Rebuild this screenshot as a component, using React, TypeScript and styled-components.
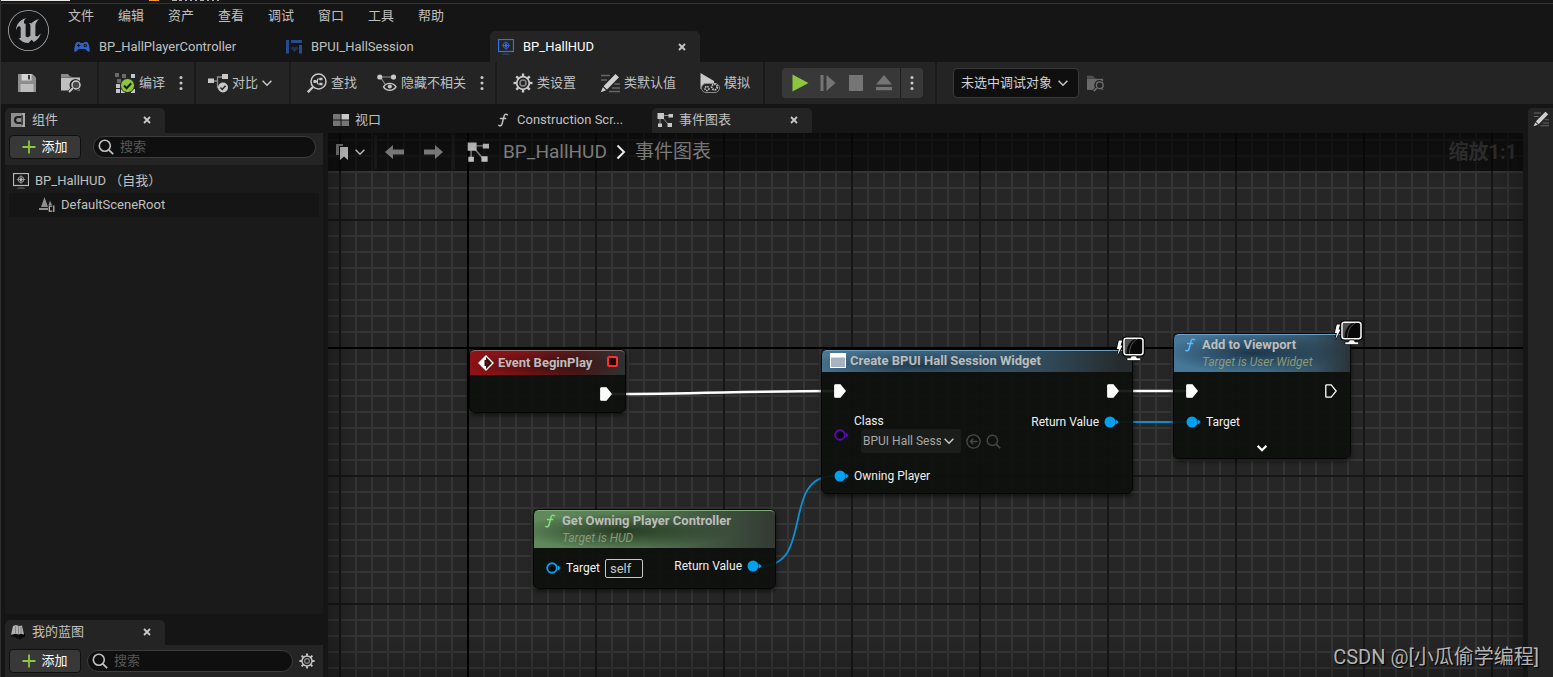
import React from 'react';
import styled, { createGlobalStyle, css } from 'styled-components';
import { SiUnrealengine } from 'react-icons/si';

const GlobalStyle = createGlobalStyle`
  * { box-sizing: border-box; }
  html, body { margin: 0; padding: 0; background: #151515; }
  body, button, input, select {
    font-family: Roboto, "Noto Sans CJK SC", sans-serif;
    font-size: 13px;
    line-height: 16px;
    color: #c0c0c0;
  }
  button { background: none; border: 0; padding: 0; margin: 0; cursor: pointer; }
  svg { display: block; flex: none; }
`;

/* ---------- window frame ---------- */

const Window = styled.div`
  position: relative;
  display: flex;
  flex-direction: column;
  min-height: 100vh;
  background: #151515;
  border-left: 1px solid #2e302e;
  overflow: hidden;
`;

const BackStrip = styled.div`
  height: 4px;
  background: #161616;
  border-bottom: 1px solid #333;
`;

const Header = styled.header`
  display: flex;
  height: 58px;
`;

const LogoCell = styled.div`
  width: 55px;
  padding: 6px 0 0 7px;
  color: #a9adb0;
`;

const HeaderMain = styled.div`
  flex: 1;
  display: flex;
  flex-direction: column;
  justify-content: space-between;
`;

const MenuBar = styled.nav`
  display: flex;
`;

const MenuItem = styled.button`
  height: 24px;
  padding: 0 12px;
`;

const DocTabs = styled.div`
  display: flex;
  gap: 2px;
  padding-left: 10px;
`;

const DocTab = styled.div<{ $active?: boolean }>`
  display: flex;
  align-items: center;
  gap: 9px;
  width: 210px;
  height: 31px;
  padding: 0 12px 0 8px;
  border-radius: 5px 5px 0 0;
  color: #c0c0c0;
  ${p => p.$active && css`background: #242424; color: #fff;`}
`;

const TabLabel = styled.span`
  flex: 1;
  white-space: nowrap;
`;

const CloseButton = styled.button`
  display: flex;
  align-items: center;
  justify-content: center;
  width: 12px;
  height: 16px;
`;

/* ---------- toolbar ---------- */

const Toolbar = styled.div`
  display: flex;
  height: 42px;
  background: #242424;
  white-space: nowrap;
`;

const Group = styled.div<{ $gap?: number; $start?: number; $end?: number }>`
  display: flex;
  align-items: center;
  gap: ${p => p.$gap ?? 0}px;
  padding: 0 ${p => p.$end ?? 6}px 0 ${p => p.$start ?? 6}px;
  & + & { border-left: 2px solid #1a1a1a; }
`;

const ToolButton = styled.button`
  display: flex;
  align-items: center;
  gap: 4px;
  height: 32px;
  padding: 0 10px;
`;

const DotsButton = styled.button`
  width: 9px;
  margin-left: 4px;
  padding-right: 5px;
`;

const PlayBar = styled.div`
  display: flex;
  height: 30px;
  padding-left: 4px;
  background: #383838;
  border-radius: 4px;
`;

const PlayButton = styled.button<{ $last?: boolean }>`
  display: flex;
  align-items: center;
  justify-content: center;
  width: 28px;
  ${p => p.$last && css`width: 23px; margin-left: 2px; border-left: 1px solid #1f1f1f;`}
`;

const SelectBox = styled.div`
  position: relative;
  display: flex;
  svg { position: absolute; right: 11px; top: 50%; margin-top: -5px; pointer-events: none; }
`;

const DebugSelect = styled.select`
  appearance: none;
  width: 126px;
  height: 30px;
  padding: 0 0 0 7px;
  color: #d0d0d0;
  background: #0f0f0f;
  border: 1px solid #3a3a3a;
  border-radius: 4px;
`;

/* ---------- body columns ---------- */

const Body = styled.div`
  flex: 1;
  display: flex;
  padding-top: 4px;
`;

const SidePanel = styled.aside`
  display: flex;
  flex-direction: column;
  width: 327px;
  padding: 0 5px 0 4px;
`;

const TabRow = styled.div`
  display: flex;
  gap: 2px;
`;

const PanelTab = styled.div<{ $active?: boolean }>`
  display: flex;
  align-items: center;
  gap: 6px;
  width: 160px;
  height: 25px;
  padding: 0 12px 2px 5px;
  border-radius: 5px 5px 0 0;
  background: ${p => (p.$active ? '#242424' : 'transparent')};
`;

const PanelBar = styled.div<{ $pad: string; $gap: number }>`
  display: flex;
  align-items: center;
  gap: ${p => p.$gap}px;
  padding: ${p => p.$pad};
  background: #242424;
`;

const AddButton = styled.button`
  display: flex;
  align-items: center;
  justify-content: center;
  gap: 5px;
  width: 72px;
  height: 24px;
  color: #fff;
  background: #383838;
  border: 1px solid #101010;
  border-radius: 4px;
`;

const SearchField = styled.label`
  flex: 1;
  display: flex;
  align-items: center;
  gap: 6px;
  height: 22px;
  padding: 0 10px 0 4px;
  background: #0f0f0f;
  border: 1px solid #3c3c3c;
  border-radius: 11px;
  input {
    flex: 1;
    min-width: 0;
    padding: 0;
    background: none;
    border: 0;
    outline: 0;
  }
  input::placeholder { color: #575757; }
`;

const Tree = styled.ul`
  flex: 1;
  margin: 0 0 6px;
  padding: 4px;
  list-style: none;
  background: #1a1a1a;
  border-radius: 4px 4px 0 0;
`;

const TreeRow = styled.li<{ $depth?: number }>`
  display: flex;
  align-items: center;
  gap: 6px;
  height: 24px;
  padding-left: ${p => 4 + (p.$depth ?? 0) * 26}px;
  background: ${p => (p.$depth ? '#151515' : 'transparent')};
`;

const Center = styled.main`
  flex: 1;
  display: flex;
  flex-direction: column;
  min-width: 0;
`;

const RightRail = styled.aside`
  width: 25px;
  margin-left: 5px;
  padding: 3px 0 0 5px;
  background: #242424;
  border-radius: 4px 0 0 0;
`;

/* ---------- graph ---------- */

const Graph = styled.section`
  position: relative;
  flex: 1;
  overflow: hidden;
  background-color: #262626;
  background-image:
    linear-gradient(#000, #000),
    linear-gradient(#000, #000),
    linear-gradient(90deg, #161616 2px, transparent 2px),
    linear-gradient(#161616 2px, transparent 2px),
    linear-gradient(90deg, #353535 2px, transparent 2px),
    linear-gradient(#353535 2px, transparent 2px);
  background-size: 2px 100%, 100% 2px, 128px 128px, 128px 128px, 16px 16px, 16px 16px;
  background-position: 139px 0, 0 214px, 11px 86px, 11px 86px, 11px 6px, 11px 6px;
  background-repeat: no-repeat, no-repeat, repeat, repeat, repeat, repeat;
  &::after {
    content: '';
    position: absolute;
    inset: 0;
    box-shadow: inset 0 0 40px rgba(0, 0, 0, 0.45);
    pointer-events: none;
  }
`;

const GraphBar = styled.div`
  position: relative;
  display: flex;
  align-items: center;
  height: 38px;
  padding-right: 6px;
  background: rgba(0, 0, 0, 0.56);
  white-space: nowrap;
`;

const BarPart = styled.div<{ $pad: string; $gap: number }>`
  display: flex;
  align-items: center;
  gap: ${p => p.$gap}px;
  height: 34px;
  padding: ${p => p.$pad};
  & + & { border-left: 3px solid #1a1a1a; }
`;

const CrumbTrail = styled.nav`
  display: flex;
  align-items: center;
  gap: 9px;
`;

const Crumb = styled.a`
  font-size: 19px;
  line-height: 24px;
  color: #868686;
  text-decoration: none;
`;

const ZoomLabel = styled.div`
  margin-left: auto;
  font-size: 20px;
  line-height: 24px;
  font-weight: 700;
  color: #303030;
`;

const Wires = styled.svg`
  position: absolute;
  left: 0;
  top: 0;
`;

type Tone = 'event' | 'widget' | 'call' | 'pure';

const toneFill: Record<Tone, string> = {
  event: 'radial-gradient(ellipse 80px 14px at 76px 14px, rgba(40,8,8,.6), transparent), linear-gradient(90deg, #8f1216 0%, #841518 35%, #4a1b1c 70%, #303030 96%)',
  widget: 'radial-gradient(ellipse 120px 16px at 100px 14px, rgba(16,32,44,.65), transparent), linear-gradient(90deg, #4a7794 0%, #406a86 40%, #314c5c 70%, #262c2e 96%)',
  call: 'radial-gradient(ellipse 90px 20px at 80px 18px, rgba(16,34,48,.75), transparent), linear-gradient(90deg, #47789a 0%, #42708f 50%, #365366 80%, #2a3338 100%)',
  pure: 'radial-gradient(ellipse 110px 18px at 90px 20px, rgba(22,36,20,.75), transparent), linear-gradient(90deg, #608a5c 0%, #547a50 45%, #405440 75%, #333a33 100%)',
};

const toneEdge: Record<Tone, string> = {
  event: '#8d7476',
  widget: '#6f9ab8',
  call: '#6aa3cc',
  pure: '#7fae7a',
};

const headSize: Record<Tone, { height: number; top: number }> = {
  event: { height: 25, top: 4 },
  widget: { height: 22, top: 2 },
  call: { height: 38, top: 2 },
  pure: { height: 38, top: 2 },
};

const Node = styled.article<{ $x: number; $y: number; $w: number; $h: number }>`
  position: absolute;
  left: ${p => p.$x}px;
  top: ${p => p.$y}px;
  width: ${p => p.$w}px;
  height: ${p => p.$h}px;
  border-radius: 6px;
  background: rgba(13, 16, 13, 0.93);
  border: 1px solid #060606;
  box-shadow: 0 2px 5px rgba(0, 0, 0, 0.6);
  font-size: 12px;
  color: #f0f0f0;
`;

const NodeHead = styled.header<{ $tone: Tone }>`
  display: flex;
  align-items: flex-start;
  gap: 4px;
  height: ${p => headSize[p.$tone].height}px;
  padding: ${p => headSize[p.$tone].top}px 5px 0 8px;
  border-radius: 5px 5px 0 0;
  border-top: 1px solid ${p => toneEdge[p.$tone]};
  background: ${p => toneFill[p.$tone]};
`;

const NodeTitle = styled.h2`
  flex: 1;
  margin: 0;
  font-size: 13px;
  line-height: 16px;
  font-weight: 700;
  color: #bdbdbd;
  white-space: nowrap;
  small {
    display: block;
    font-size: 12px;
    line-height: 18px;
    font-weight: 400;
    font-style: italic;
    color: #8b9a78;
  }
`;

const NodeBody = styled.div`
  display: flex;
  justify-content: space-between;
  align-items: flex-start;
  padding: 8px 13px 0 12px;
`;

const PinColumn = styled.div<{ $end?: boolean }>`
  display: flex;
  flex-direction: column;
  align-items: ${p => (p.$end ? 'flex-end' : 'flex-start')};
  gap: 12px;
`;

const Pin = styled.div<{ $h?: number }>`
  display: flex;
  align-items: center;
  gap: 5px;
  height: ${p => p.$h ?? 16}px;
  white-space: nowrap;
`;

const ClassField = styled.div`
  display: flex;
  flex-direction: column;
  height: 42px;
  label { line-height: 15px; }
`;

const ClassControls = styled.div`
  display: flex;
  align-items: center;
  gap: 5px;
  padding-left: 7px;
`;

const ClassSelectBox = styled(SelectBox)`
  svg { right: 7px; }
`;

const ClassSelect = styled.select`
  appearance: none;
  width: 100px;
  height: 24px;
  padding: 0 20px 0 2px;
  font-size: 12px;
  color: #a8a8a8;
  background: #1b1d1b;
  border: 0;
  border-radius: 3px;
`;

const SelfInput = styled.input`
  width: 38px;
  height: 19px;
  padding: 0 4px;
  color: #c8c8c8;
  background: transparent;
  border: 1px solid #c8c8c8;
  border-radius: 2px;
`;

const Expand = styled.button`
  display: flex;
  justify-content: center;
  width: 100%;
  padding-top: 13px;
`;

const Badge = styled.div`
  position: absolute;
  right: -13px;
  top: -14px;
`;

const Watermark = styled.div`
  position: absolute;
  right: 14px;
  bottom: 8px;
  font-size: 20px;
  line-height: 24px;
  color: #b4b4b4;
  text-shadow: 1px 1px 1px #000;
  white-space: nowrap;
`;

/* ---------- icons ---------- */

const CloseIcon = () => (
  <svg width="8" height="8" viewBox="0 0 8 8" stroke="#c8c8c8" strokeWidth="1.8">
    <path d="M1 1l6 6M7 1L1 7" />
  </svg>
);

const Chevron = ({ color = '#c8c8c8', bold = false }) => (
  <svg width="10" height="10" viewBox="0 0 10 10" fill="none" stroke={color} strokeWidth={bold ? 2.2 : 1.5}>
    <path d="M.6 2.8L5 7.2l4.400-4.400" />
  </svg>
);

const Dots = () => (
  <svg width="4" height="16" viewBox="0 0 4 16" fill="#c8c8c8">
    <circle cx="2" cy="2.500" r="1.500" /><circle cx="2" cy="8" r="1.500" /><circle cx="2" cy="13.500" r="1.500" />
  </svg>
);

const GamepadIcon = () => (
  <svg width="16" height="12" viewBox="0 0 16 12">
    <path fill="#2f62c4" d="M3.500 1h2.200l.8 1h3l.8-1h2.200c1.200 0 2 1.500 2.500 3.500.5 2 .8 3.600.8 5 0 1.300-1.400 1.600-2.300.8L11.200 8H4.800l-2.300 2.300c-.9.800-2.300.5-2.300-.8 0-1.400.3-3 .8-5S2.300 1 3.500 1z" />
    <path stroke="#151515" strokeWidth="1" d="M3 4.500h3.400M4.700 2.800v3.400" />
    <circle cx="11.300" cy="4.500" r="1.700" fill="#151515" /><circle cx="11.300" cy="4.500" r=".7" fill="#2f62c4" />
  </svg>
);

const WidgetIcon = () => (
  <svg width="16" height="14" viewBox="0 0 16 14" fill="#294a8e">
    <path d="M0 0h3v13.500H0zM5 0h11v3H5zM13 5h3v8.500h-3z" />
    <path d="M8.500 12L5.300 8.800c-.7-1.800 1.800-2.800 3.200-1 1.400-1.800 3.900-.8 3.200 1z" opacity=".6" />
  </svg>
);

const HudIcon = ({ color }: { color: string }) => (
  <svg width="16" height="16" viewBox="0 0 16 16" fill="none" stroke={color}>
    <rect x=".5" y=".5" width="15" height="12" strokeWidth="1.200" />
    <circle cx="8" cy="6.500" r="2.900" strokeWidth="1" opacity=".8" />
    <path d="M8 2.200v8.600M3.700 6.500h8.600" strokeWidth=".9" opacity=".7" />
    <circle cx="8" cy="6.500" r="1.500" fill={color} stroke="none" />
    <path d="M3.500 15.500c2-1.200 7-1.200 9 0z" fill={color} stroke="none" opacity=".6" />
  </svg>
);

const SaveIcon = () => (
  <svg width="20" height="20" viewBox="0 0 20 20">
    <path fill="#8e8e8e" d="M1 1h14.500L19 4.500V19H1z" />
    <path fill="#d4d4d4" d="M4.500 1h10v6.500h-10z" /><path fill="#3a3a3a" d="M11 2h2v4.500h-2z" />
    <path fill="#bdbdbd" d="M3.500 11h13v8h-13z" />
  </svg>
);

const BrowseIcon = ({ size = 20, dim = false }) => (
  <svg width={size} height={size} viewBox="0 0 20 20" opacity={dim ? 0.45 : 1}>
    <path fill="#8a8a8a" d="M0 1h7l2 2.500h1.500V4H0z" />
    <path fill="#c0c0c0" d="M0 4.500h19v13H0z" />
    <circle cx="14.500" cy="12" r="6" fill="#242424" />
    <circle cx="15" cy="12" r="4" fill={dim ? '#242424' : '#4a4a4a'} stroke="#d0d0d0" strokeWidth="1.500" />
    <path stroke="#242424" strokeWidth="4" d="M12 15l-4 4.500" /><path stroke="#d0d0d0" strokeWidth="1.800" d="M12 15l-4 4" />
  </svg>
);

const CompileIcon = () => (
  <svg width="20" height="20" viewBox="0 0 20 20">
    <path fill="#6a6a6a" d="M0 0h4v4H0zM7 1h4v4H7zM2 6h4v4H2z" />
    <path fill="#c4c4c4" d="M16 1h4v4h-4zM1 11h4v4H1zM1 16h4v4H1zM6 16h4v4H6zM16 16h4v4h-4zM10 6h4v4h-4z" />
    <circle cx="12.500" cy="12.500" r="7" fill="#8cc63f" stroke="#242424" strokeWidth="1" />
    <path d="M9 12.500l2.600 2.800 4.600-5" fill="none" stroke="#16230a" strokeWidth="2" />
  </svg>
);

const DiffIcon = () => (
  <svg width="20" height="20" viewBox="0 0 20 20">
    <path d="M5 8h4.500V4H14M9.500 8v6.500H12" fill="none" stroke="#8a8a8a" strokeWidth="1.300" />
    <path fill="#c8c8c8" d="M0 5.500h6v4.500H0zM14 1h6v5h-6z" />
    <circle cx="15" cy="14.500" r="5" fill="#c8c8c8" />
    <path d="M12.400 14.500l1.900 2 3.200-3.700" fill="none" stroke="#242424" strokeWidth="1.500" />
  </svg>
);

const FindIcon = () => (
  <svg width="20" height="20" viewBox="0 0 20 20" fill="none" stroke="#c8c8c8">
    <circle cx="11.500" cy="8.500" r="7.500" strokeWidth="1.500" />
    <path d="M6 14L.8 19.200" strokeWidth="2.400" />
    <path d="M8 8.500h2.500M13 6h-2.500v5H13" strokeWidth="1" />
    <path d="M6.500 7h3v3h-3zM12.500 4.800h3v2.400h-3zM12.500 9.800h3v2.400h-3z" fill="#c8c8c8" stroke="none" />
  </svg>
);

const HideIcon = () => (
  <svg width="20" height="20" viewBox="0 0 20 20" fill="none">
    <path d="M3 4h14M4 5l4 6" stroke="#8a8a8a" strokeWidth="1.200" />
    <circle cx="2.800" cy="4" r="2.600" fill="#c8c8c8" /><circle cx="16.500" cy="4" r="2.600" fill="#c8c8c8" />
    <path d="M6.500 13.800c3-4.600 9.500-4.600 12.500 0-3 4.600-9.500 4.600-12.500 0z" fill="#242424" stroke="#c8c8c8" strokeWidth="1.400" />
    <circle cx="12.800" cy="13.500" r="2.100" fill="#c8c8c8" />
  </svg>
);

const GearIcon = ({ size = 20 }) => (
  <svg width={size} height={size} viewBox="0 0 20 20" fill="none" stroke="#c8c8c8">
    <circle cx="10" cy="10" r="6.300" strokeWidth="1.800" />
    <circle cx="10" cy="10" r="3" strokeWidth="1.500" opacity=".6" />
    {[0, 45, 90, 135, 180, 225, 270, 315].map(a => (
      <path key={a} d="M10 .5v3" strokeWidth="2.400" transform={`rotate(${a} 10 10)`} />
    ))}
  </svg>
);

const PencilIcon = ({ size = 20 }) => (
  <svg width={size} height={size} viewBox="0 0 20 20">
    <path d="M1 2.500h9M1 7h6M14.500 11H20M12 15h8M9 18.500h11" stroke="#666" strokeWidth="1.300" />
    <path d="M15.500 1L19 4.200 7 16.500 3.500 13.200z" fill="#d0d0d0" />
    <path d="M2.800 14.300l3.300 3L.8 19.200z" fill="#d0d0d0" />
  </svg>
);

const SimulateIcon = () => (
  <svg width="20" height="20" viewBox="0 0 20 20">
    <path d="M.5 0L14 8v4L.5 16z" fill="#c8c8c8" />
    <rect x="1.500" y="10.500" width="18" height="9" rx="4.500" fill="#242424" stroke="#8a8a8a" />
    <circle cx="7" cy="15.500" r="2" fill="none" stroke="#c8c8c8" strokeWidth="1.600" strokeDasharray="1.400 .8" />
    <circle cx="14.500" cy="14" r="2.800" fill="none" stroke="#c8c8c8" strokeWidth="1.800" strokeDasharray="1.600 .9" />
  </svg>
);

const PlayIcon = () => <svg width="18" height="18" viewBox="0 0 18 18"><path d="M1.500.5L17.500 9l-16 8.500z" fill="#8cc63f" /></svg>;
const StepIcon = () => <svg width="16" height="16" viewBox="0 0 16 16"><path d="M.5 0h3v16h-3zM6.500 0L15.500 8l-9 8z" fill="#757575" /></svg>;
const StopIcon = () => <svg width="16" height="16" viewBox="0 0 16 16"><path d="M1 0h14v16H1z" fill="#757575" /></svg>;
const EjectIcon = () => <svg width="16" height="16" viewBox="0 0 16 16"><path d="M8 0l8 9.500H0zM0 12h16v3.200H0z" fill="#757575" /></svg>;

const ComponentsIcon = () => (
  <svg width="16" height="16" viewBox="0 0 16 16">
    <path fill="#8f8f8f" d="M1 1h10.500v14H1z" />
    <path d="M11.500 5H8.200Q5 5 5 8t3.200 3h3.300" stroke="#202020" strokeWidth="2.200" fill="none" />
    <path fill="#a8a8a8" d="M11.500 1H15v14h-3.500v-2h1.300V3h-1.300z" />
  </svg>
);

const BlueprintBookIcon = () => (
  <svg width="16" height="16" viewBox="0 0 16 16">
    <path fill="#0a0a0a" d="M1.500 9h13.500v4l-3 1-2 1.500L6 14l-5-2z" />
    <path fill="#b0b0b0" d="M3 2l3-1 3 1 3-.5 2 9-3-.8-2.500.8-3-.8L1 10.800z" />
    <path d="M5.500 2.500v7M8.500 2v8M11 2.500v7" stroke="#777" strokeWidth=".8" />
  </svg>
);

const SceneRootIcon = () => (
  <svg width="16" height="16" viewBox="0 0 16 16">
    <path fill="#8e8e8e" d="M5.500 0L9 10H2zM11 3.500l2 4.500H9.500zM0 11h9v2H0z" />
    <path d="M13.300 9.200h-3v5h3M14.800 8.500v6.500" stroke="#b5b5b5" strokeWidth="1.300" fill="none" />
  </svg>
);

const PlusIcon = () => <svg width="14" height="14" viewBox="0 0 14 14"><path d="M7 .5v13M.5 7h13" stroke="#8cc63f" strokeWidth="1.800" /></svg>;

const SearchIcon = ({ color = '#c0c0c0', size = 16 }) => (
  <svg width={size} height={size} viewBox="0 0 16 16" fill="none" stroke={color}>
    <circle cx="6.800" cy="6.800" r="5.500" strokeWidth="1.600" /><path d="M10.800 10.800l4.400 4.400" strokeWidth="1.800" />
  </svg>
);

const ViewportIcon = () => (
  <svg width="16" height="12" viewBox="0 0 16 12">
    <path fill="#757575" d="M0 0h7.500v5.500H0zM0 6.500h7.500V12H0zM8.500 6.500H16V12H8.500z" /><path fill="#c8c8c8" d="M8.500 0H16v5.500H8.500z" />
  </svg>
);

const FunctionIcon = ({ color }: { color: string }) => (
  <svg width="16" height="16" viewBox="0 0 16 16" fill="none" stroke={color} strokeWidth="1.500" strokeLinecap="round">
    <path d="M12.500 2.800C10.800 1.600 9.400 2.400 8.900 4.600L7.200 11.300c-.5 2.200-1.700 3-3.400 2M5.500 6.500h5.200" />
  </svg>
);

const GraphIcon = ({ size = 16 }) => (
  <svg width={size} height={size} viewBox="0 0 16 16">
    <path d="M4 3.500h9M4.500 4.500l7 8M3 5v8" stroke="#8a8a8a" strokeWidth="1" />
    <path fill="#c8c8c8" d="M.5 1H7v6H.5zM11.500 2H16v3.500h-4.500zM1 11.500h4V15H1zM10.500 11H15v4h-4.500z" />
  </svg>
);

const BookmarkIcon = () => (
  <svg width="12" height="16" viewBox="0 0 12 16">
    <path d="M0 0h7v2H3v9H0z" fill="#7a7a7a" /><path d="M4 3h8v13l-4-3.500L4 16z" fill="#c8c8c8" />
  </svg>
);

const ArrowIcon = ({ flip = false }) => (
  <svg width="20" height="14" viewBox="0 0 20 14" fill="#808080">
    <path d="M0 7l8-7v4.500h11v5H8V14z" transform={flip ? 'translate(20 0) scale(-1 1)' : undefined} />
  </svg>
);

const CrumbChevron = () => (
  <svg width="10" height="16" viewBox="0 0 10 16" fill="none" stroke="#fff" strokeWidth="2"><path d="M1.500 1.500L8 8l-6.500 6.500" /></svg>
);

const ExecPin = ({ open = false }) => (
  <svg width="12" height="14" viewBox="0 0 12 14">
    <path d="M1.600.8h4.600L11.200 7l-5 6.200H1.600q-.8 0-.8-.8V1.600q0-.8.8-.8z" fill={open ? 'none' : '#fff'} stroke="#fff" strokeWidth="1.300" />
  </svg>
);

const DataPin = ({ color = '#00a2f0', open = false }) => (
  <svg width="15" height="12" viewBox="0 0 15 12">
    <circle cx="6" cy="6" r={open ? 4.800 : 5.500} fill={open ? '#080a08' : color} stroke={color} strokeWidth={open ? 1.900 : 0} />
    <path d="M11.700 3.200L14.700 6l-3 2.800z" fill={color} />
  </svg>
);

const EventIcon = () => (
  <svg width="16" height="16" viewBox="0 0 16 16">
    <path d="M8 1l7 7-7 7-7-7z" fill="#360a0b" stroke="#fff" strokeWidth="1.400" />
    <path d="M8 1v4H6.500v6H8v4L1 8z" fill="#fff" /><path d="M8 5l3.500 3L8 11z" fill="#5a1012" />
  </svg>
);

const DelegateIcon = () => (
  <svg width="14" height="14" viewBox="0 0 14 14"><rect x="2" y="2" width="9" height="9" rx="1" fill="#1c0303" stroke="#ff2e2e" strokeWidth="2" /></svg>
);

const WidgetNodeIcon = () => (
  <svg width="16" height="16" viewBox="0 0 16 16"><path fill="#fff" d="M0 0h16v15H0z" /><path fill="#a6b2bf" d="M1 4.500h14V14H1z" /></svg>
);

const BackCircle = () => (
  <svg width="15" height="15" viewBox="0 0 15 15" fill="none" stroke="#454745" strokeWidth="1.400">
    <circle cx="7.500" cy="7.500" r="6.600" /><path d="M11.500 7.500h-7M7.300 4.700L4.400 7.500l2.900 2.800" />
  </svg>
);

const ClientIcon = () => (
  <svg width="30" height="26" viewBox="0 0 30 26">
    <path d="M3.800 4.500h3.400L5.600 9.500h2L2.400 19.500 3.800 13H1.800z" fill="#fff" stroke="#000" strokeWidth="1.400" paintOrder="stroke" />
    <rect x="7.200" y=".6" width="22.600" height="20" rx="3.500" fill="#000" />
    <rect x="9" y="2.200" width="19" height="16.600" rx="2.500" fill="#080808" stroke="#fff" strokeWidth="1.500" />
    <path d="M11.500 17.500c.5-8 3.500-13 9-14.500h-8.500q-2 0-2 2v10.500q0 2 1.500 2z" fill="#4e4e4e" />
    <path d="M14.500 17.500c0-7 3-12 8-14.500" stroke="#6a6a6a" strokeWidth=".8" fill="none" />
    <path d="M16.500 20h4.500l1 2h3.500v2.500H12V22h3.500z" fill="#fff" stroke="#000" strokeWidth=".6" />
  </svg>
);

/* ---------- page ---------- */

const menus = ['文件', '编辑', '资产', '查看', '调试', '窗口', '工具', '帮助'];

const Close = () => <CloseButton aria-label="关闭"><CloseIcon /></CloseButton>;

const Search = () => (
  <SearchField>
    <SearchIcon />
    <input type="text" placeholder="搜索" aria-label="搜索" />
  </SearchField>
);

export default function App() {
  return (
    <Window>
      <GlobalStyle />
      <BackStrip>
        <svg width="400" height="3" viewBox="0 0 400 3">
          <path d="M0 0h69v1H0z" fill="#e8e4e2" />
          <path d="M148 0h10v1h-10z" fill="#f39a1c" />
          <path d="M171 0h5v1h-5zM178 0h3v1h-3zM184 0h2v1h-2zM189 0h2v1h-2zM194 0h2v1h-2zM199 0h4v1h-4zM206 0h2v1h-2zM211 0h2v1h-2zM216 0h2v1h-2z" fill="#b0b0b0" />
        </svg>
      </BackStrip>
      <Header>
        <LogoCell><SiUnrealengine size={41} /></LogoCell>
        <HeaderMain>
          <MenuBar>{menus.map(m => <MenuItem key={m}>{m}</MenuItem>)}</MenuBar>
          <DocTabs>
            <DocTab><GamepadIcon /><TabLabel>BP_HallPlayerController</TabLabel></DocTab>
            <DocTab><WidgetIcon /><TabLabel>BPUI_HallSession</TabLabel></DocTab>
            <DocTab $active><HudIcon color="#3573e8" /><TabLabel>BP_HallHUD</TabLabel><Close /></DocTab>
          </DocTabs>
        </HeaderMain>
      </Header>

      <Toolbar>
        <Group $gap={4}>
          <ToolButton aria-label="保存"><SaveIcon /></ToolButton>
          <ToolButton aria-label="浏览"><BrowseIcon /></ToolButton>
        </Group>
        <Group>
          <ToolButton><CompileIcon />编译</ToolButton>
          <DotsButton aria-label="编译选项"><Dots /></DotsButton>
        </Group>
        <Group $start={2} $end={7}>
          <ToolButton><DiffIcon />对比<Chevron /></ToolButton>
        </Group>
        <Group>
          <ToolButton><FindIcon />查找</ToolButton>
          <ToolButton><HideIcon />隐藏不相关</ToolButton>
          <DotsButton aria-label="隐藏选项"><Dots /></DotsButton>
        </Group>
        <Group $gap={4} $end={3}>
          <ToolButton><GearIcon />类设置</ToolButton>
          <ToolButton><PencilIcon />类默认值</ToolButton>
          <ToolButton><SimulateIcon />模拟</ToolButton>
        </Group>
        <Group $start={17} $end={12}>
          <PlayBar>
            <PlayButton aria-label="运行"><PlayIcon /></PlayButton>
            <PlayButton aria-label="步进"><StepIcon /></PlayButton>
            <PlayButton aria-label="停止"><StopIcon /></PlayButton>
            <PlayButton aria-label="弹出"><EjectIcon /></PlayButton>
            <PlayButton $last aria-label="运行选项"><Dots /></PlayButton>
          </PlayBar>
        </Group>
        <Group $start={16} $gap={8}>
          <SelectBox>
            <DebugSelect aria-label="调试对象"><option>未选中调试对象</option></DebugSelect>
            <Chevron />
          </SelectBox>
          <button aria-label="浏览调试对象"><BrowseIcon size={17} dim /></button>
        </Group>
      </Toolbar>

      <Body>
        <SidePanel>
          <TabRow><PanelTab $active><ComponentsIcon /><TabLabel>组件</TabLabel><Close /></PanelTab></TabRow>
          <PanelBar $pad="2px 7px 6px 4px" $gap={12}>
            <AddButton><PlusIcon />添加</AddButton>
            <Search />
          </PanelBar>
          <Tree>
            <TreeRow><HudIcon color="#b8b8b8" />BP_HallHUD （自我）</TreeRow>
            <TreeRow $depth={1}><SceneRootIcon />DefaultSceneRoot</TreeRow>
          </Tree>
          <TabRow><PanelTab $active><BlueprintBookIcon /><TabLabel>我的蓝图</TabLabel><Close /></PanelTab></TabRow>
          <PanelBar $pad="4px 8px 4px 4px" $gap={6}>
            <AddButton><PlusIcon />添加</AddButton>
            <Search />
            <button aria-label="设置"><GearIcon size={16} /></button>
          </PanelBar>
        </SidePanel>

        <Center>
          <TabRow>
            <PanelTab><ViewportIcon /><TabLabel>视口</TabLabel></PanelTab>
            <PanelTab><FunctionIcon color="#c0c0c0" /><TabLabel>Construction Scr...</TabLabel></PanelTab>
            <PanelTab $active><GraphIcon /><TabLabel>事件图表</TabLabel><Close /></PanelTab>
          </TabRow>
          <Graph>
            <GraphBar>
              <BarPart $pad="0 9px 0 8px" $gap={7}><BookmarkIcon /><Chevron /></BarPart>
              <BarPart $pad="0 9px 0 8px" $gap={18}>
                <button aria-label="后退"><ArrowIcon /></button>
                <button aria-label="前进"><ArrowIcon flip /></button>
              </BarPart>
              <BarPart $pad="0 0 0 12px" $gap={14}>
                <GraphIcon size={22} />
                <CrumbTrail>
                  <Crumb href="#hud">BP_HallHUD</Crumb>
                  <CrumbChevron />
                  <Crumb href="#events">事件图表</Crumb>
                </CrumbTrail>
              </BarPart>
              <ZoomLabel>缩放1:1</ZoomLabel>
            </GraphBar>

            <Wires width="1100" height="540" viewBox="0 0 1100 540" fill="none">
              <path d="M284 261C360 261 430 258 506 258M791 258h68" stroke="#fff" strokeWidth="2.500" />
              <path d="M790 289h69M433 433C487 433 452 343 506 343" stroke="#0d8fd0" strokeWidth="1.800" />
            </Wires>

            <Node $x={141} $y={216} $w={157} $h={64}>
              <NodeHead $tone="event"><EventIcon /><NodeTitle>Event BeginPlay</NodeTitle><DelegateIcon /></NodeHead>
              <NodeBody>
                <span />
                <Pin $h={22}><ExecPin /></Pin>
              </NodeBody>
            </Node>

            <Node $x={493} $y={216} $w={312} $h={145}>
              <NodeHead $tone="widget"><WidgetNodeIcon /><NodeTitle>Create BPUI Hall Session Widget</NodeTitle></NodeHead>
              <Badge><ClientIcon /></Badge>
              <NodeBody>
                <PinColumn>
                  <Pin $h={22}><ExecPin /></Pin>
                  <Pin $h={42}>
                    <DataPin open color="#5a0ab4" />
                    <ClassField>
                      <label htmlFor="widget-class">Class</label>
                      <ClassControls>
                        <ClassSelectBox>
                          <ClassSelect id="widget-class"><option>BPUI Hall Sess</option></ClassSelect>
                          <Chevron />
                        </ClassSelectBox>
                        <BackCircle />
                        <SearchIcon color="#454745" size={15} />
                      </ClassControls>
                    </ClassField>
                  </Pin>
                  <Pin><DataPin />Owning Player</Pin>
                </PinColumn>
                <PinColumn $end>
                  <Pin $h={22}><ExecPin /></Pin>
                  <Pin>Return Value<DataPin /></Pin>
                </PinColumn>
              </NodeBody>
            </Node>

            <Node $x={845} $y={200} $w={178} $h={126}>
              <NodeHead $tone="call">
                <FunctionIcon color="#5db8f5" />
                <NodeTitle>Add to Viewport<small>Target is User Widget</small></NodeTitle>
              </NodeHead>
              <Badge><ClientIcon /></Badge>
              <NodeBody>
                <PinColumn>
                  <Pin $h={22}><ExecPin /></Pin>
                  <Pin><DataPin />Target</Pin>
                </PinColumn>
                <Pin $h={22}><ExecPin open /></Pin>
              </NodeBody>
              <Expand aria-label="展开"><Chevron bold color="#fff" /></Expand>
            </Node>

            <Node $x={205} $y={376} $w={243} $h={80}>
              <NodeHead $tone="pure">
                <FunctionIcon color="#86dc80" />
                <NodeTitle>Get Owning Player Controller<small>Target is HUD</small></NodeTitle>
              </NodeHead>
              <NodeBody>
                <Pin $h={24}>
                  <DataPin open />
                  <label htmlFor="target-self">Target</label>
                  <SelfInput id="target-self" defaultValue="self" />
                </Pin>
                <Pin $h={20}>Return Value<DataPin /></Pin>
              </NodeBody>
            </Node>
          </Graph>
        </Center>

        <RightRail><button aria-label="细节"><PencilIcon size={16} /></button></RightRail>
      </Body>
      <Watermark>CSDN @[小瓜偷学编程]</Watermark>
    </Window>
  );
}
